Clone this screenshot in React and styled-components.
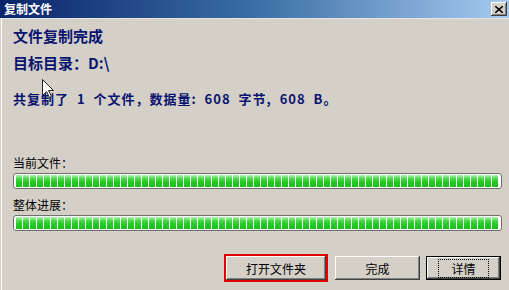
import React from 'react';
import styled, { createGlobalStyle } from 'styled-components';

const GlobalStyle = createGlobalStyle`
  html, body {
    margin: 0;
    padding: 0;
    background: #d4d0c8;
  }
  body {
    font-family: "Noto Sans CJK SC", "Liberation Sans", sans-serif;
  }
`;

const Window = styled.div`
  position: relative;
  width: 509px;
  height: 290px;
  background: #d4d0c8;
  display: flex;
  flex-direction: column;
  overflow: hidden;
`;

const TitleBar = styled.div`
  height: 18px;
  display: flex;
  align-items: center;
  justify-content: space-between;
  padding: 0 2px 0 4px;
  background: linear-gradient(to right, #0a246a 0%, #3a6ea5 50%, #a6caf0 100%);
`;

const Title = styled.span`
  color: #fff;
  font-size: 12px;
  font-weight: 700;
  line-height: 18px;
`;

const CloseButton = styled.div`
  width: 16px;
  height: 14px;
  box-sizing: border-box;
  background: #d4d0c8;
  box-shadow: inset -1px -1px #404040, inset 1px 1px #fff,
    inset -2px -2px #808080;
  display: flex;
  align-items: center;
  justify-content: center;
`;

const Body = styled.div`
  flex: 1;
  display: flex;
  flex-direction: column;
  padding: 9px 8px 0 12px;
  border-left: 1px solid #d4d0c8;
  box-shadow: inset 1px 0 #fff, inset 0 1px #e8e6e0;
`;

const Heading = styled.div`
  color: #0a1470;
  font-size: 15px;
  font-weight: 700;
  line-height: 18px;
  margin-bottom: ${(p) => p.$gap || 0}px;
`;

const Summary = styled.div`
  color: #0a1470;
  font-size: 13px;
  font-weight: 700;
  line-height: 16px;
  letter-spacing: 1px;
  white-space: pre;
  margin-top: 19px;
`;

const Label = styled.div`
  color: #000;
  font-size: 12px;
  line-height: 16px;
  margin-top: ${(p) => p.$top}px;
  margin-bottom: 2px;
`;

const Bar = styled.div`
  width: 489px;
  height: 16px;
  box-sizing: border-box;
  border: 1px solid #6f6f6f;
  border-radius: 3px;
  background: #fff;
  padding: 1px 2px;
`;

const Fill = styled.div`
  height: 12px;
  background:
    repeating-linear-gradient(to right, transparent 0 6px, #fff 6px 7px),
    linear-gradient(to bottom, #b2f2b2 0%, #4ed84e 30%, #22c922 60%, #1cbd1c 100%);
`;

const Buttons = styled.div`
  display: flex;
  justify-content: flex-end;
  align-items: center;
  gap: 6px;
  margin-top: auto;
  margin-bottom: 10px;
`;

const Button = styled.button`
  width: ${(p) => p.$w}px;
  height: 24px;
  box-sizing: border-box;
  border: none;
  background: #d4d0c8;
  font-family: "Noto Sans CJK SC", "Liberation Sans", sans-serif;
  font-size: 12px;
  color: #000;
  padding: 0;
  margin-right: ${(p) => p.$after || 0}px;
  box-shadow: inset -1px -1px #404040, inset 1px 1px #fff,
    inset -2px -2px #808080;
  outline: ${(p) => (p.$marked ? '2px solid #e00000' : 'none')};
  ${(p) => p.$default && `border: 1px solid #000;`}
`;

const Focus = styled.span`
  display: inline-block;
  padding: 1px 12px;
  border: 1px dotted #000;
  line-height: 15px;
`;

const Cursor = styled.svg`
  position: absolute;
  left: 42px;
  top: 79px;
`;

export default function App() {
  return (
    <>
      <GlobalStyle />
      <Window>
        <TitleBar>
          <Title>复制文件</Title>
          <CloseButton>
            <svg width="8" height="7" viewBox="0 0 8 7">
              <path d="M0 0 L8 7 M8 0 L0 7" stroke="#000" strokeWidth="1.6" />
            </svg>
          </CloseButton>
        </TitleBar>
        <Body>
          <Heading $gap={9}>文件复制完成</Heading>
          <Heading>目标目录：D:\</Heading>
          <Summary>共复制了  1  个文件，数据量:  608  字节,  608  B。</Summary>
          <Label $top={48}>当前文件：</Label>
          <Bar>
            <Fill />
          </Bar>
          <Label $top={8}>整体进展：</Label>
          <Bar>
            <Fill />
          </Bar>
          <Buttons>
            <Button $w={100} $marked $after={3}>
              打开文件夹
            </Button>
            <Button $w={85}>完成</Button>
            <Button $w={75} $default>
              <Focus>详情</Focus>
            </Button>
          </Buttons>
        </Body>
        <Cursor width="13" height="20" viewBox="0 0 13 20">
          <path
            d="M0.5 0.5 L0.5 16.5 L4.5 12.5 L7.5 18.5 L9.5 17.5 L6.5 11.5 L11.5 11.5 Z"
            fill="#fff"
            stroke="#222"
            strokeWidth="1"
          />
        </Cursor>
      </Window>
    </>
  );
}
